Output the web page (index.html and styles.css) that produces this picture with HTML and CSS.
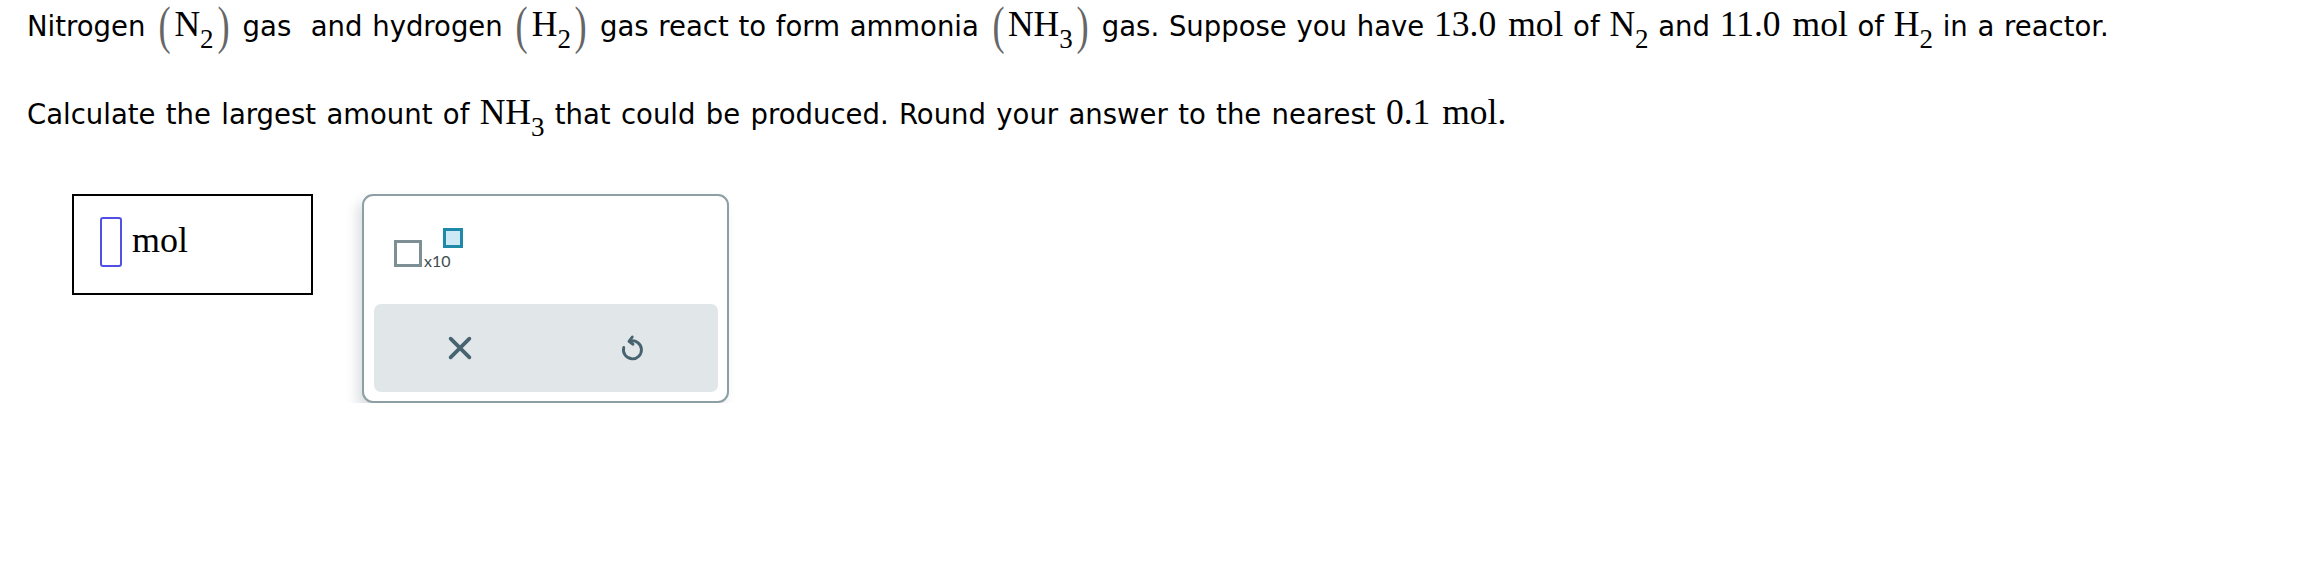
FILE: index.html
```html
<!DOCTYPE html>
<html>
<head>
<meta charset="utf-8">
<link rel="stylesheet" href="styles.css">
</head>
<body>
<div class="page">
  <p class="q">Nitrogen <span class="par">(</span><span class="m">N<sub>2</sub></span><span class="par">)</span> gas&nbsp; and hydrogen <span class="par">(</span><span class="m">H<sub>2</sub></span><span class="par">)</span> gas react to form ammonia <span class="par">(</span><span class="m">NH<sub>3</sub></span><span class="par">)</span> gas. Suppose you have <span class="m">13.0<span class="sp"></span>mol</span> of <span class="m">N<sub>2</sub></span> and <span class="m">11.0<span class="sp"></span>mol</span> of <span class="m">H<sub>2</sub></span> in a reactor.</p>
  <p class="q q2">Calculate the largest amount of <span class="m">NH<sub>3</sub></span> that could be produced. Round your answer to the nearest <span class="m">0.1<span class="sp"></span>mol.</span></p>
  <div class="answer-row">
    <div class="answer-box">
      <span class="cursor"></span>
      <span class="unit">mol</span>
    </div>
    <div class="panel">
      <div class="sci">
        <span class="base"></span>
        <span class="x10">x10</span>
        <span class="exp"></span>
      </div>
      <div class="actions">
        <button class="act" aria-label="clear">
          <svg width="30" height="30" viewBox="0 0 24 24"><path d="M4.5 4.5 L19.5 19.5 M19.5 4.5 L4.5 19.5" stroke="#46636f" stroke-width="3" stroke-linecap="round" fill="none"/></svg>
        </button>
        <button class="act" aria-label="undo">
          <svg width="30" height="30" viewBox="0 0 24 24"><path d="M10.5 6.5 A7.2 7.2 0 1 1 5.4 11.6" stroke="#46636f" stroke-width="2.3" stroke-linecap="round" fill="none"/><path d="M12.2 3.2 L9.6 6.6 L12.8 9" stroke="#46636f" stroke-width="2.3" stroke-linecap="round" stroke-linejoin="round" fill="none"/></svg>
        </button>
      </div>
    </div>
  </div>
</div>
</body>
</html>
```
FILE: styles.css
```css
html, body {
  margin: 0;
  padding: 0;
  background: #ffffff;
}
.page {
  padding: 0 0 0 27px;
  font-family: "DejaVu Sans", Verdana, sans-serif;
  font-size: 27.5px;
  word-spacing: 1px;
  color: #000;
}
.q {
  margin: 0;
  line-height: 52px;
  height: 52px;
  white-space: nowrap;
}
.q2 {
  margin-top: 36px;
  word-spacing: 1.6px;
}
.m {
  font-family: "Liberation Serif", "Times New Roman", serif;
  font-size: 35.5px;
  word-spacing: 0;
  line-height: 1;
}
.sp {
  display: inline-block;
  width: 12px;
}
.m sub {
  font-size: 27px;
  vertical-align: -12px;
  line-height: 1;
}
.par {
  font-family: "Liberation Serif", serif;
  font-size: 52px;
  color: #666;
  display: inline-block;
  transform: scaleX(0.7);
  line-height: 0;
  vertical-align: -7px;
  margin: 0 1px;
  word-spacing: 0;
}
.answer-row {
  display: flex;
  align-items: flex-start;
  margin-top: 54px;
  margin-left: 45px;
  gap: 49px;
}
.answer-box {
  box-sizing: border-box;
  width: 241px;
  height: 101px;
  border: 2px solid #000;
  display: flex;
  align-items: flex-start;
  padding: 21px 0 0 26px;
}
.cursor {
  box-sizing: border-box;
  width: 22px;
  height: 50px;
  border: 2px solid #5050e6;
  border-radius: 3px;
}
.unit {
  font-family: "Liberation Serif", "Times New Roman", serif;
  font-size: 36px;
  margin-left: 10px;
  line-height: 46px;
}
.panel {
  box-sizing: border-box;
  width: 367px;
  height: 209px;
  border: 2px solid #8d9fa4;
  border-radius: 11px;
  background: #fff;
  box-shadow: -5px 7px 12px rgba(60, 80, 90, 0.18);
  padding: 0 9px 9px 10px;
  display: flex;
  flex-direction: column;
}
.sci {
  height: 108px;
  display: flex;
  align-items: flex-start;
  padding-left: 20px;
}
.base {
  box-sizing: border-box;
  width: 28px;
  height: 27px;
  border: 3px solid #7d8f94;
  margin-top: 44px;
}
.x10 {
  font-family: "Lato", "Open Sans", sans-serif;
  font-size: 16px;
  color: #3d4c52;
  margin-top: 55px;
  margin-left: 2px;
}
.exp {
  box-sizing: border-box;
  width: 20px;
  height: 20px;
  border: 3px solid #1f8aa7;
  background: #cde9f5;
  margin-top: 32px;
  margin-left: -8px;
}
.actions {
  flex: 1;
  display: flex;
  background: #e1e6e9;
  border-radius: 7px;
}
.act {
  flex: 1;
  border: 0;
  background: transparent;
  display: flex;
  align-items: center;
  justify-content: center;
  padding: 0;
  margin: 0;
}
```
